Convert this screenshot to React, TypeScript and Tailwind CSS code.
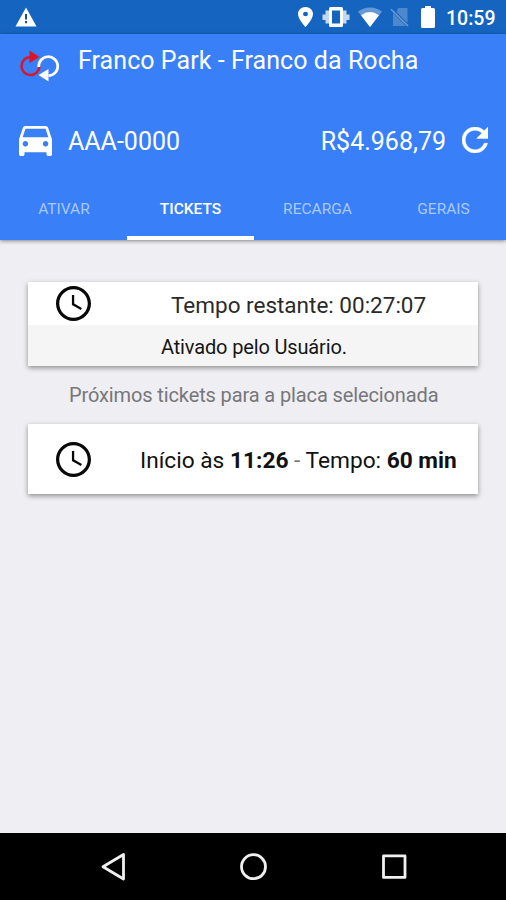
import React from "react";

function Clock() {
  return (
    <svg viewBox="2 2 20 20" className="h-[35px] w-[35px] shrink-0" fill="#080808">
      <path d="M11.99 2C6.47 2 2 6.48 2 12s4.47 10 9.99 10C17.52 22 22 17.52 22 12S17.52 2 11.99 2zM12 20.15c-4.5 0-8.15-3.65-8.15-8.15S7.500 3.850 12 3.850s8.150 3.650 8.150 8.150-3.650 8.150-8.150 8.150z" />
      <path d="M12.400 7.200H11.100v5.600l5.100 2.900.6-1.100-4.400-2.600z" />
    </svg>
  );
}

function StatusBar() {
  return (
    <div className="flex h-[34px] items-center bg-[#1565c0] pr-[11px] pl-[15px] text-white">
      <svg viewBox="0 0 22 20" className="h-5 w-[22px]" fill="#fff">
        <path d="M11 .5 21.500 19.500H.5z" />
        <path d="M10 7h2v5.500h-2zM10 14h2v2.300h-2z" fill="#1b4f98" />
      </svg>
      <svg viewBox="5 2 14 20" className="ml-auto h-5 w-[15px]" preserveAspectRatio="none" fill="#fff">
        <path d="M12 2C8.130 2 5 5.130 5 9c0 5.250 7 13 7 13s7-7.750 7-13c0-3.870-3.130-7-7-7zm0 9.300a2.300 2.300 0 1 1 0-4.600 2.300 2.300 0 0 1 0 4.600z" />
      </svg>
      <svg viewBox="0 0 28 20" className="ml-[9px] h-5 w-7" fill="#fff">
        <path fillRule="evenodd" d="M8.500 0h11a1.500 1.500 0 0 1 1.500 1.500v17a1.500 1.500 0 0 1-1.500 1.500h-11A1.500 1.500 0 0 1 7 18.500v-17A1.500 1.500 0 0 1 8.500 0zM10 3.500v13h8v-13z" />
        <path d="M3.500 3.500H7v13H3.500zM21 3.500h3.500v13H21zM.5 7.500h3v5.500h-3zM24.500 7.500h3v5.500h-3z" opacity=".75" />
      </svg>
      <svg viewBox="0 0 24 20" className="ml-2 h-5 w-6" fill="#fff">
        <path d="M0 4.500Q12-3.500 24 4.500L12 20z" opacity=".35" />
        <path d="M3 8.300Q12 1.800 21 8.300L12 20z" />
      </svg>
      <svg viewBox="0 0 20 20" className="ml-2 h-5 w-5">
        <path d="M8 1h9.500v15L6.500 5zM3 6l13 13H3z" fill="#4d88cd" />
        <path d="M1 2.200 18 19" stroke="#6b9cd6" strokeWidth="1.600" />
      </svg>
      <svg viewBox="0 0 14 22" className="ml-[11px] h-[22px] w-[14px]" fill="#fff">
        <path d="M4 0h6v2h2.500A1.500 1.500 0 0 1 14 3.500v17a1.500 1.500 0 0 1-1.500 1.500h-11A1.500 1.500 0 0 1 0 20.500v-17A1.500 1.500 0 0 1 1.500 2H4z" />
      </svg>
      <span className="ml-[11px] w-[49px] pt-[3px] text-[19.5px] leading-none font-medium whitespace-nowrap">10:59</span>
    </div>
  );
}

function Logo() {
  return (
    <svg viewBox="0 0 40 32" className="mt-[16px] ml-5 h-8 w-10 shrink-0" fill="none">
      <path d="M10 7a9 9 0 1 0 9.500 9.500" stroke="#dc1428" strokeWidth="2.500" />
      <path d="M9.500.5 19.500 7 9.500 13z" fill="#dc1428" />
      <path d="M18.800 17a9.500 9.500 0 1 1 9.700 8.700" stroke="#fff" strokeWidth="2.700" />
      <path d="M28.500 19v12.500L18.500 25z" fill="#fff" />
    </svg>
  );
}

const tabs = ["ATIVAR", "TICKETS", "RECARGA", "GERAIS"];

function Header() {
  return (
    <header className="relative h-[206px] bg-[#397ff7] text-white shadow-[0_1px_4px_rgba(0,0,0,0.45)]">
      <div className="flex h-[72px]">
        <Logo />
        <h1 className="mt-3 ml-[18px] text-[25px] leading-[30px] tracking-[0.06px] whitespace-nowrap">Franco Park - Franco da Rocha</h1>
      </div>
      <div className="flex h-[70px] items-center pr-[18px] pl-[19px]">
        <svg viewBox="3 5 18 16" className="h-[30px] w-[33px]" preserveAspectRatio="none" fill="#fff">
          <path d="M18.920 6.010C18.720 5.420 18.160 5 17.500 5h-11c-.66 0-1.210.42-1.420 1.010L3 12v8c0 .55.45 1 1 1h1c.55 0 1-.45 1-1v-1h12v1c0 .55.45 1 1 1h1c.55 0 1-.45 1-1v-8l-2.080-5.990zM6.500 16c-.83 0-1.500-.67-1.500-1.500S5.670 13 6.500 13s1.500.67 1.500 1.500S7.330 16 6.500 16zm11 0c-.83 0-1.500-.67-1.500-1.500s.67-1.500 1.500-1.500 1.500.67 1.500 1.500-.67 1.500-1.500 1.500zM5 11l1.500-4.500h11L19 11H5z" />
        </svg>
        <span className="ml-4 pt-[2px] text-[25px] leading-[30px]">AAA-0000</span>
        <span className="ml-auto pt-[2px] text-[25px] leading-[30px]">R$4.968,79</span>
        <svg viewBox="4 4 16 16" className="mb-[2px] ml-4 h-[26px] w-[26px]" fill="#fff" stroke="#fff" strokeWidth=".3">
          <path d="M17.650 6.350C16.200 4.900 14.210 4 12 4c-4.420 0-7.990 3.580-7.990 8s3.570 8 7.990 8c3.730 0 6.840-2.550 7.730-6h-2.080c-.82 2.330-3.040 4-5.650 4-3.310 0-6-2.690-6-6s2.690-6 6-6c1.660 0 3.140.69 4.220 1.780L13 11h7V4l-2.350 2.350z" />
        </svg>
      </div>
      <nav className="grid h-16 grid-cols-[127px_127px_126px_126px] text-[15.5px]">
        {tabs.map((t) => (
          <div
            key={t}
            className={
              t === "TICKETS"
                ? "border-b-4 border-white pt-[23px] text-center leading-5 font-medium"
                : "border-b-4 border-transparent pt-[23px] pl-px text-center leading-5 text-[#a9c9fd]"
            }
          >
            {t}
          </div>
        ))}
      </nav>
    </header>
  );
}

export default function App() {
  return (
    <div className="flex h-[900px] w-[506px] flex-col overflow-hidden bg-[#eeeef3] font-['Roboto',sans-serif]">
      <StatusBar />
      <Header />
      <main className="flex-1 px-7 pt-[42px]">
        <section className="h-[84px] bg-white shadow-[0_2px_5px_rgba(0,0,0,0.4)]">
          <div className="flex h-[43px] items-center pl-7">
            <Clock />
            <span className="ml-20 pt-[2px] text-[22.5px] leading-7 whitespace-nowrap text-[#2a2a2a]">Tempo restante: 00:27:07</span>
          </div>
          <div className="h-[41px] bg-[#f5f5f5] pl-[133px] text-[20px] leading-[44px] tracking-[-0.15px] whitespace-nowrap text-[#151515]">Ativado pelo Usuário.</div>
        </section>
        <p className="h-[58px] pl-[41px] text-[20px] leading-[58px] tracking-[-0.12px] whitespace-nowrap text-[#77777b]">Próximos tickets para a placa selecionada</p>
        <section className="flex h-[70px] items-center bg-white pl-7 shadow-[0_2px_5px_rgba(0,0,0,0.4)]">
          <Clock />
          <span className="ml-[49px] pt-[3px] text-[22.7px] leading-7 whitespace-nowrap text-[#111]">
            Início às <b className="font-bold">11:26</b> <span className="text-[#777]">-</span> Tempo: <b className="font-bold">60 min</b>
          </span>
        </section>
      </main>
      <footer className="h-[67px] bg-black">
        <svg viewBox="0 0 506 67" className="h-[67px] w-[506px]" fill="none" stroke="#f0f0f0" strokeWidth="2.800" strokeLinejoin="round">
          <path d="M123.500 21.500v24.500L103 33.700z" />
          <circle cx="253.500" cy="33.700" r="12" />
          <rect x="383.500" y="22.900" width="21.500" height="21.500" />
        </svg>
      </footer>
    </div>
  );
}
